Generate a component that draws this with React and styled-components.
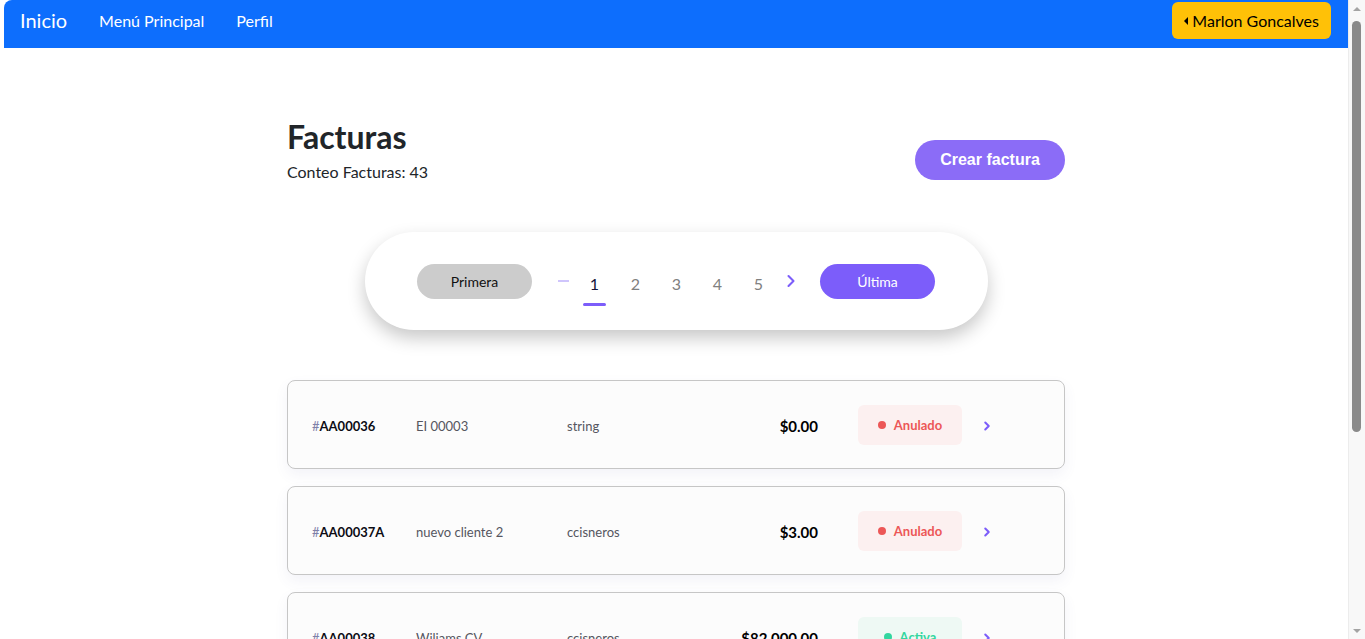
import React from "react"
import styled, { createGlobalStyle } from "styled-components"
import { ChevronRight } from "lucide-react"

const GlobalStyle = createGlobalStyle`
  * { box-sizing: border-box; }
  body {
    margin: 0;
    padding: 0 17px 0 4px;
    background: #fff;
    font-family: "Lato", "Noto Sans", sans-serif;
    color: #212529;
  }
`

// browser scrollbar drawn over the right edge
const ScrollBar = styled.div`
  position: fixed;
  top: 0;
  right: 0;
  width: 17px;
  height: 100vh;
  background: #f8f8f8;
  border-left: 1px solid #ececec;
  display: flex;
  flex-direction: column;
  align-items: center;
  padding: 7px 0 6px;
`

const ScrollArrow = styled.span`
  width: 0;
  height: 0;
  border-left: 4px solid transparent;
  border-right: 4px solid transparent;
  ${p => (p.down ? "border-top: 4px solid #a3a3a3;" : "border-bottom: 4px solid #a3a3a3;")}
`

const ScrollThumb = styled.span`
  width: 9px;
  height: 411px;
  margin: 10px 1px 0 0;
  border-radius: 5px;
  background: #8a8a8a;
  flex: none;
`

const ScrollSpacer = styled.span`
  flex: 1;
`

const Navbar = styled.nav`
  height: 48px;
  background: #0d6efd;
  border-top-left-radius: 8px;
  display: flex;
  align-items: flex-start;
  padding: 2px 17px 0 16px;
`

const Brand = styled.a`
  color: #fff;
  font-size: 20px;
  line-height: 37px;
  margin-right: 16px;
  text-decoration: none;
`

const NavLinks = styled.div`
  display: flex;
  flex: 1;
`

const NavLink = styled.a`
  color: #fff;
  font-size: 16px;
  line-height: 37px;
  padding: 0 16px;
  text-decoration: none;
`

const UserButton = styled.button`
  display: flex;
  align-items: center;
  height: 37px;
  padding: 0 12px;
  background: #ffc107;
  border: none;
  border-radius: 6px;
  font-family: inherit;
  font-size: 16px;
  color: #000;

  &::before {
    content: "";
    border-top: 4px solid transparent;
    border-bottom: 4px solid transparent;
    border-right: 4px solid #000;
    margin-right: 4px;
  }
`

const Main = styled.main`
  width: 778px;
  margin: 0 auto;
  padding: 70px 0 30px;
`

const Header = styled.header`
  display: flex;
  justify-content: space-between;
  align-items: flex-end;
`

const Title = styled.h1`
  margin: 0 0 4px;
  font-size: 32px;
  line-height: 38px;
  font-weight: 700;
`

const Count = styled.p`
  margin: 0;
  font-size: 16px;
  line-height: 24px;
`

const CreateButton = styled.button`
  width: 150px;
  height: 40px;
  margin-bottom: 4px;
  border: none;
  border-radius: 20px;
  background: #8b6cf7;
  color: #fff;
  font-family: "Liberation Sans", Arial, sans-serif;
  font-weight: 700;
  font-size: 16px;
`

const Pager = styled.div`
  width: 623px;
  height: 98px;
  margin: 48px auto 50px;
  border-radius: 49px;
  background: #fff;
  box-shadow: 0 8px 18px rgba(0, 0, 0, 0.22);
  display: flex;
  align-items: center;
  justify-content: center;
`

const PagerButton = styled.button`
  width: 115px;
  height: 35px;
  border: none;
  border-radius: 18px;
  background: ${p => (p.primary ? "#7c5dfa" : "#cccccc")};
  color: ${p => (p.primary ? "#fff" : "#111")};
  font-family: inherit;
  font-size: 14px;
  margin: ${p => (p.primary ? "0 0 0 18px" : "0 20px 0 0")};
`

const Dash = styled.span`
  width: 22px;
  display: flex;
  justify-content: center;

  &::before {
    content: "";
    width: 11px;
    height: 2px;
    background: #cfc5fc;
  }
`

const PageNum = styled.span`
  position: relative;
  width: 41px;
  text-align: center;
  font-size: 16px;
  line-height: 24px;
  margin-top: 5px;
  color: ${p => (p.active ? "#14143a" : "#808080")};

  &::after {
    content: "";
    display: ${p => (p.active ? "block" : "none")};
    position: absolute;
    left: 9px;
    bottom: -10px;
    width: 23px;
    height: 3px;
    border-radius: 2px;
    background: #7c5dfa;
  }
`

const NextArrow = styled.span`
  width: 23px;
  display: flex;
  justify-content: center;
  color: #7c5dfa;
`

const List = styled.div`
  display: flex;
  flex-direction: column;
  gap: 17px;
`

const Card = styled.div`
  height: 89px;
  border: 1px solid #c6c6c6;
  border-radius: 8px;
  background: #fcfcfc;
  box-shadow: 0 6px 14px rgba(90, 90, 160, 0.07);
  padding: 2px 24px 0;
  display: grid;
  grid-template-columns: 104px 151px 1fr 150px 104px 78px;
  align-items: center;
`

const InvoiceId = styled.span`
  font-size: 13px;
  font-weight: 700;
  color: #0c0c14;

  &::before {
    content: "#";
    font-weight: 400;
    color: #7e80a8;
  }
`

const Cell = styled.span`
  font-size: 13px;
  color: #55565f;
`

const Amount = styled.span`
  font-size: 15px;
  font-weight: 700;
  color: #000;
  text-align: right;
  padding-right: 40px;
`

const Badge = styled.span`
  height: 40px;
  margin-top: -2px;
  border-radius: 6px;
  display: flex;
  align-items: center;
  justify-content: center;
  gap: 8px;
  font-size: 13px;
  font-weight: 700;
  background: ${p => (p.status === "Activa" ? "#eef9f4" : "#fcf0f0")};
  color: ${p => (p.status === "Activa" ? "#33d69f" : "#ec5757")};

  &::before {
    content: "";
    width: 8px;
    height: 8px;
    border-radius: 50%;
    background: currentColor;
  }
`

const RowArrow = styled.span`
  padding-left: 18px;
  display: flex;
  color: #7c5dfa;
`

const invoices = [
  { id: "AA00036", client: "EI 00003", user: "string", total: "$0.00", status: "Anulado" },
  { id: "AA00037A", client: "nuevo cliente 2", user: "ccisneros", total: "$3.00", status: "Anulado" },
  { id: "AA00038", client: "Wiliams CV", user: "ccisneros", total: "$82,000.00", status: "Activa" },
  { id: "AA00039", client: "Wiliams CV", user: "ccisneros", total: "$1,250.00", status: "Activa" },
  { id: "AA00040", client: "EI 00003", user: "string", total: "$540.00", status: "Activa" },
]

export default function App() {
  return (
    <>
      <GlobalStyle />
      <Navbar>
        <Brand href="#">Inicio</Brand>
        <NavLinks>
          <NavLink href="#">Menú Principal</NavLink>
          <NavLink href="#">Perfil</NavLink>
        </NavLinks>
        <UserButton>Marlon Goncalves</UserButton>
      </Navbar>
      <Main>
        <Header>
          <div>
            <Title>Facturas</Title>
            <Count>Conteo Facturas: 43</Count>
          </div>
          <CreateButton>Crear factura</CreateButton>
        </Header>
        <Pager>
          <PagerButton>Primera</PagerButton>
          <Dash />
          {[1, 2, 3, 4, 5].map(n => (
            <PageNum key={n} active={n === 1}>{n}</PageNum>
          ))}
          <NextArrow><ChevronRight size={20} strokeWidth={2.5} /></NextArrow>
          <PagerButton primary>Última</PagerButton>
        </Pager>
        <List>
          {invoices.map(inv => (
            <Card key={inv.id}>
              <InvoiceId>{inv.id}</InvoiceId>
              <Cell>{inv.client}</Cell>
              <Cell>{inv.user}</Cell>
              <Amount>{inv.total}</Amount>
              <Badge status={inv.status}>{inv.status}</Badge>
              <RowArrow><ChevronRight size={14} strokeWidth={3.5} /></RowArrow>
            </Card>
          ))}
        </List>
      </Main>
      <ScrollBar>
        <ScrollArrow />
        <ScrollThumb />
        <ScrollSpacer />
        <ScrollArrow down />
      </ScrollBar>
    </>
  )
}
